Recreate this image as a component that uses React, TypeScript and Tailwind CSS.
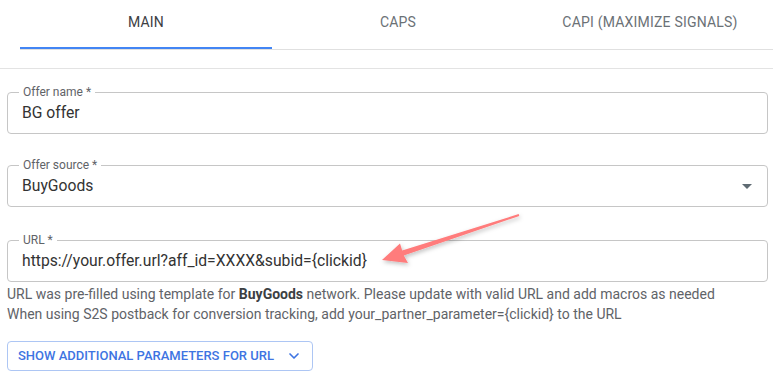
import { ChevronDown } from 'lucide-react'

const font = { fontFamily: 'Roboto, "Noto Sans", Arial, sans-serif' }

function Field({ label, value, select }: { label: string; value: string; select?: boolean }) {
  return (
    <div className="relative h-[42px] rounded-[4px] border border-[#c6c6c6] flex items-center pl-[14px] pr-[14px]">
      <span className="absolute left-[11px] top-[-8px] bg-white px-[4px] text-[12px] leading-[14px] text-[#5f6368]">
        {label}
      </span>
      <span className="flex-1 text-[15.7px] text-[#333333]">{value}</span>
      {select && (
        <svg width="10" height="5" viewBox="0 0 10 5" className="mr-[1px]">
          <path d="M0 0 L10 0 L5 5 Z" fill="#5f6b73" />
        </svg>
      )}
    </div>
  )
}

export default function App() {
  const tabs = ['MAIN', 'CAPS', 'CAPI (MAXIMIZE SIGNALS)']

  return (
    <div className="relative w-[773px] h-[381px] overflow-hidden bg-white" style={font}>
      <div className="h-[69px] border-b border-[#e3e3e3]">
        <div className="ml-[20px] flex border-b border-[#e0e0e0]">
          {tabs.map((t, i) => (
            <div
              key={t}
              className={`w-[252px] h-[49px] shrink-0 flex items-center justify-center pb-[2px] text-[14px] tracking-[0.2px] ${
                i === 0 ? 'border-b-2 border-[#4285f4] text-[#3c4043]' : 'border-b-2 border-transparent text-[#6b7176]'
              }`}
            >
              {t}
            </div>
          ))}
        </div>
      </div>

      <div className="pl-[7px] pr-[5px] pt-[23px]">
        <Field label="Offer name *" value="BG offer" />
        <div className="mt-[31px]">
          <Field label="Offer source *" value="BuyGoods" select />
        </div>
        <div className="mt-[33px]">
          <Field label="URL *" value="https://your.offer.url?aff_id=XXXX&subid={clickid}" />
        </div>
        <div className="mt-[2px] text-[14px] leading-[20px] text-[#5f6368]">
          <div>
            URL was pre-filled using template for <b className="font-bold text-[#3c4043]">BuyGoods</b> network. Please update with valid URL and add macros as needed
          </div>
          <div>When using S2S postback for conversion tracking, add your_partner_parameter={'{clickid}'} to the URL</div>
        </div>
        <button className="mt-[17px] h-[30px] w-[306px] rounded-[4px] border border-[#adc6f4] flex items-center pl-[10px] text-[13px] font-medium text-[#3e74e2]">
          SHOW ADDITIONAL PARAMETERS FOR URL
          <ChevronDown size={16} strokeWidth={2.5} className="ml-[12px]" />
        </button>
      </div>

      <svg className="absolute left-0 top-0 pointer-events-none" width="773" height="381">
        <defs>
          <filter id="sh" x="-20%" y="-50%" width="140%" height="200%">
            <feDropShadow dx="1" dy="2" stdDeviation="2" floodColor="#000" floodOpacity="0.25" />
          </filter>
        </defs>
        <polygon
          points="382,260 400,243.5 402.2,250.6 518.7,214.1 519.3,215.9 403.8,255.4 408,263"
          fill="#ff7b7b"
          filter="url(#sh)"
        />
      </svg>
    </div>
  )
}
